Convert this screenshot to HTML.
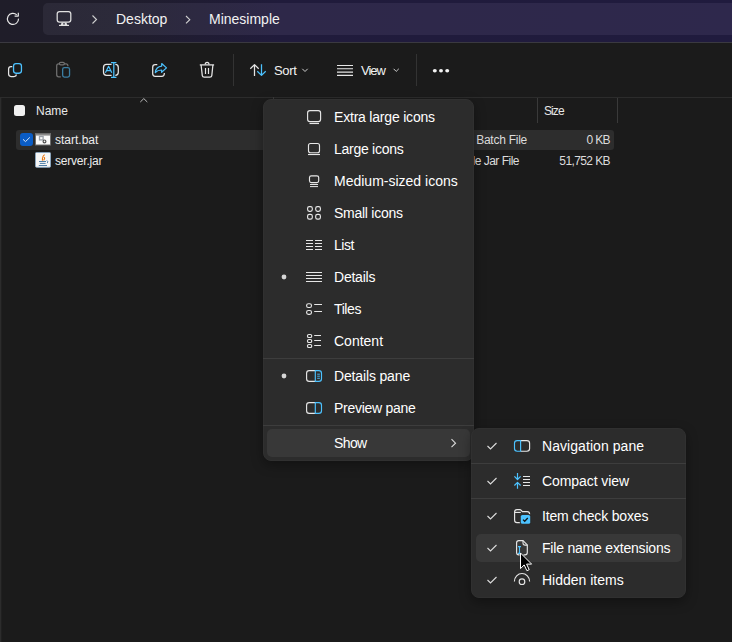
<!DOCTYPE html>
<html><head><meta charset="utf-8">
<style>
*{margin:0;padding:0;box-sizing:border-box}
html,body{width:732px;height:642px;overflow:hidden;background:#1b1b1b;font-family:"Liberation Sans",sans-serif;color:#fff}
.a{position:absolute}
svg{position:absolute;overflow:visible}
.t{position:absolute;white-space:nowrap;line-height:1}
#top{left:0;top:0;width:732px;height:42px;background:linear-gradient(90deg,#1f1d29 0px,#1f1d2b 120px,#201b3b 280px,#201b3e 732px)}
#addr{left:43px;top:3px;width:700px;height:32px;border-radius:5px;background:linear-gradient(90deg,#2b2937 0px,#2c2a3a 77px,#2e2849 237px,#2e284c 689px)}
#topline{left:0;top:42px;width:732px;height:1px;background:#3a3940}
.menu{background:#2c2c2c;border-radius:8px;box-shadow:0 4px 12px rgba(0,0,0,.35);border:1px solid #303030}
.mt{font-size:14px;color:#fff}
.sep{position:absolute;height:1px;background:#3d3d3d}
.hov{position:absolute;background:#383838;border-radius:5px}
</style></head><body>
<div id="top" class="a"></div>
<div id="addr" class="a"></div>
<div id="topline" class="a"></div>

<!-- refresh -->
<svg style="left:0;top:0" width="30" height="40">
  <path d="M18.5 18.6 A5.55 5.55 0 1 1 16.8 14.9" fill="none" stroke="#e8e8e8" stroke-width="1.2"/>
  <path d="M18.3 12.8 V16.1 H14.6" fill="none" stroke="#e8e8e8" stroke-width="1.2" stroke-linejoin="round"/>
</svg>
<!-- monitor -->
<svg style="left:0;top:0" width="80" height="40">
  <rect x="57.2" y="11.5" width="13.6" height="10.6" rx="2.3" fill="none" stroke="#e0e0e0" stroke-width="1.25"/>
  <path d="M61.6 22.6 L60.6 25.3 H67.4 L66.4 22.6 Z" fill="#e0e0e0"/><path d="M59 25.4 H69" stroke="#e0e0e0" stroke-width="1.2"/><rect x="63.2" y="23.2" width="1.6" height="1.3" fill="#2b2937"/>
</svg>
<svg style="left:0;top:0" width="200" height="40">
  <path d="M92.5 15.5 L96.5 19.5 L92.5 23.5" fill="none" stroke="#d0d0d0" stroke-width="1.1"/>
  <path d="M186 16 L189.8 19.7 L186 23.4" fill="none" stroke="#d0d0d0" stroke-width="1.1"/>
</svg>
<div class="t" style="left:116px;top:12px;font-size:14px;color:#f2f2f2">Desktop</div>
<div class="t" style="left:209px;top:12px;font-size:14px;color:#f2f2f2">Minesimple</div>


<!-- command bar -->
<svg style="left:0;top:0" width="460" height="97">
  <!-- copy -->
  <path d="M12.3 66.6 H11 Q8.6 66.6 8.6 69 V74.1 Q8.6 76.5 11 76.5 H14 Q16.3 76.5 16.3 74.6" fill="none" stroke="#e6e6e6" stroke-width="1.25"/>
  <rect x="13.55" y="63.55" width="7.9" height="9.7" rx="2.4" fill="none" stroke="#4cc2ff" stroke-width="1.3"/>
  <!-- paste (disabled) -->
  <path d="M60.8 76.8 H58.7 Q56.7 76.8 56.7 74.8 V65.8 Q56.7 63.8 58.7 63.8 H65.9 Q67.9 63.8 67.9 65.8 V66.3" fill="none" stroke="#707070" stroke-width="1.25"/>
  <rect x="59.4" y="62.3" width="5" height="2.6" rx="1.3" fill="#1b1b1b" stroke="#707070" stroke-width="1.2"/>
  <rect x="62.65" y="67.55" width="6.9" height="9.6" rx="1.8" fill="none" stroke="#3b7ea3" stroke-width="1.3"/>
  <!-- rename -->
  <path d="M111.6 64.4 H106.5 Q103.5 64.4 103.5 67.4 V72.3 Q103.5 75.3 106.5 75.3 H111.6" fill="none" stroke="#e6e6e6" stroke-width="1.25"/>
  <path d="M115.6 64.4 H115.3 Q118.3 64.4 118.3 67.4 V72.3 Q118.3 75.3 115.3 75.3 H115.6" fill="none" stroke="#e6e6e6" stroke-width="1.25"/>
  <path d="M113.8 62.5 V77.4 M111 62.5 H116.4 M111 77.4 H116.4" stroke="#4cc2ff" stroke-width="1.25" fill="none"/>
  <path d="M105.4 72.7 L108.6 66.3 L111.8 72.7 M106.4 70.6 H110.8" stroke="#4cc2ff" stroke-width="1.2" fill="none" stroke-linejoin="round"/>
  <!-- share -->
  <path d="M157.3 64.7 H155.2 Q152.7 64.7 152.7 67.2 V73.8 Q152.7 76.3 155.2 76.3 H161.8 Q164.3 76.3 164.3 73.8 V73" fill="none" stroke="#e6e6e6" stroke-width="1.25"/>
  <path d="M161.7 63.5 L166.5 67.9 L161.6 72.3 V70 Q157.6 70 155.3 72.5 Q156 66.6 161.7 66.1 Z" fill="none" stroke="#4cc2ff" stroke-width="1.2" stroke-linejoin="round"/>
  <!-- delete -->
  <path d="M199.8 64.9 H214.1" fill="none" stroke="#e6e6e6" stroke-width="1.25"/>
  <path d="M205.2 64.6 Q205.2 62.4 207.1 62.4 Q209 62.4 209 64.6" fill="none" stroke="#e6e6e6" stroke-width="1.2"/>
  <path d="M201.1 65 L202.3 75.6 Q202.5 77.2 204.2 77.2 H209.9 Q211.6 77.2 211.8 75.6 L212.9 65" fill="none" stroke="#e6e6e6" stroke-width="1.25"/>
  <path d="M205.5 68 V74 M208.5 68 V74" stroke="#e6e6e6" stroke-width="1.2"/>
  <!-- separators -->
  <path d="M233.5 54 V86 M416.5 54 V86" stroke="#333333" stroke-width="1"/>
  <!-- sort -->
  <path d="M254.5 64.6 V76 M250.3 68.8 L254.5 64.6 L258.7 68.8" fill="none" stroke="#e6e6e6" stroke-width="1.25" stroke-linejoin="round"/>
  <path d="M261.5 64.2 V75.4 M257.3 71.2 L261.5 75.4 L265.7 71.2" fill="none" stroke="#4cc2ff" stroke-width="1.25" stroke-linejoin="round"/>
  <path d="M302.3 68.8 L305 71.5 L307.7 68.8" fill="none" stroke="#cfcfcf" stroke-width="1"/>
  <!-- view -->
  <path d="M337 65.5 H353 M337 68.8 H353 M337 72.1 H353 M337 75.4 H353" stroke="#e6e6e6" stroke-width="1.1"/>
  <path d="M393.6 68.8 L396.2 71.4 L398.8 68.8" fill="none" stroke="#cfcfcf" stroke-width="1"/>
  <!-- more -->
  <ellipse cx="434.8" cy="70.8" rx="2" ry="1.75" fill="#f4f4f4"/>
  <ellipse cx="441" cy="70.8" rx="2" ry="1.75" fill="#f4f4f4"/>
  <ellipse cx="447.2" cy="70.8" rx="2" ry="1.75" fill="#f4f4f4"/>
</svg>
<div class="t" style="left:274px;top:64px;font-size:13px;color:#f2f2f2;letter-spacing:-0.3px">Sort</div>
<div class="t" style="left:361px;top:64px;font-size:13px;color:#f2f2f2;letter-spacing:-1px">View</div>

<!-- header -->
<div class="a" style="left:0;top:97px;width:732px;height:1px;background:#2c2c2c"></div>
<div class="a" style="left:0;top:98px;width:1px;height:544px;background:#2c2c2c"></div><div class="a" style="left:1px;top:98px;width:1px;height:544px;background:#202020"></div>
<div class="a" style="left:537px;top:98px;width:1px;height:25px;background:#3a3a3a"></div>
<div class="a" style="left:617px;top:98px;width:1px;height:25px;background:#3a3a3a"></div>
<div class="a" style="left:273px;top:97px;width:1px;height:3px;background:#3a3a3a"></div>
<div class="a" style="left:14px;top:105px;width:11.2px;height:11.2px;border-radius:2.5px;background:#f0f0f0"></div>
<div class="t" style="left:36px;top:105px;font-size:12px;color:#e8e8e8">Name</div>
<svg style="left:0;top:0" width="160" height="110"><path d="M140.3 102 L143.8 98.6 L147.3 102" fill="none" stroke="#bdbdbd" stroke-width="1"/></svg>
<div class="t" style="left:544px;top:105px;font-size:12px;color:#e8e8e8;letter-spacing:-0.9px">Size</div>

<!-- rows -->
<div class="a" style="left:16px;top:130px;width:598px;height:20px;border-radius:3px;background:#2d2d2d"></div>
<div class="a" style="left:20px;top:133px;width:13px;height:13px;border-radius:3px;background:#0b5dc6"></div>
<svg style="left:0;top:0" width="60" height="170">
 <path d="M23 139.3 L25.5 141.6 L29.8 137.4" fill="none" stroke="#d8e6f8" stroke-width="1"/>
 <rect x="35.5" y="133.5" width="15" height="11.5" fill="#fbfbfb" stroke="#6e6e6e" stroke-width="1"/>
 <rect x="36" y="134" width="14" height="1.6" fill="#8a8a8a"/>
 <rect x="39.5" y="136.5" width="3.6" height="3.4" fill="none" stroke="#9aa0a8" stroke-width="1.3"/>
 <circle cx="44.5" cy="141.4" r="1.4" fill="none" stroke="#505050" stroke-width="1.2"/>
 <rect x="35.5" y="152.5" width="15" height="14.8" rx="1" fill="#f7f7f7" stroke="#8aa4bc" stroke-width="1"/>
 <path d="M44.6 154.6 Q42 156.6 42.4 158.6 Q42.7 159.8 42.2 160.6 M43.7 157.2 Q45.6 157.6 43.6 160.4" fill="none" stroke="#e8740c" stroke-width="1.1"/>
 <path d="M39 161.5 H46 M39.8 163.4 H45.6 M38.8 165.5 H47" fill="none" stroke="#4f7ea6" stroke-width="1"/>
 <path d="M46.6 160.6 Q49 161.2 47.2 163.2" fill="none" stroke="#4f7ea6" stroke-width="0.9"/>
</svg>
<div class="t" style="left:55px;top:134px;font-size:12px;color:#ececec">start.bat</div>
<div class="t" style="left:55px;top:155px;font-size:12px;color:#ececec;letter-spacing:-0.2px">server.jar</div>
<div class="t" style="right:205px;top:134px;font-size:12px;color:#dcdcdc;letter-spacing:-0.25px">Windows Batch File</div>
<div class="t" style="right:213px;top:155px;font-size:12px;color:#dcdcdc;letter-spacing:-0.5px">Executable Jar File</div>
<div class="t" style="right:122px;top:134px;font-size:12px;color:#dcdcdc;letter-spacing:-0.6px">0 KB</div>
<div class="t" style="right:122px;top:155px;font-size:12px;color:#dcdcdc;letter-spacing:-0.6px">51,752 KB</div>


<!-- menu 1 -->
<div class="a menu" style="left:263px;top:99px;width:211px;height:362px"></div>
<div class="sep" style="left:263px;top:358px;width:211px"></div>
<div class="sep" style="left:263px;top:425px;width:211px"></div>
<div class="hov" style="left:267px;top:429px;width:203px;height:28px"></div>
<svg style="left:0;top:0" width="480" height="470">
 <g fill="none" stroke="#e6e6e6" stroke-width="1.15">
  <rect x="307.6" y="110.6" width="13" height="11" rx="2.3"/>
  <path d="M309.5 123.5 H319"/>
  <rect x="308.5" y="143.5" width="11" height="9.2" rx="2"/>
  <path d="M308 154.5 H320"/>
  <rect x="309.5" y="175.8" width="9.2" height="6.8" rx="1.8"/>
  <path d="M310 184.5 H318 M310 186.6 H318" stroke-width="1"/>
  <rect x="307.6" y="206.6" width="4.7" height="4.7" rx="1.7"/>
  <rect x="315.7" y="206.6" width="4.7" height="4.7" rx="1.7"/>
  <rect x="307.6" y="214.4" width="4.7" height="4.7" rx="1.7"/>
  <rect x="315.7" y="214.4" width="4.7" height="4.7" rx="1.7"/>
  <path d="M306 240.5 H313 M315 240.5 H322 M306 243.5 H313 M315 243.5 H322 M306 246.5 H313 M315 246.5 H322 M306 249.5 H313 M315 249.5 H322" stroke-width="1.1"/>
  <path d="M306 272.5 H322 M306 275.5 H322 M306 278.5 H322 M306 281.5 H322" stroke-width="1.1"/>
  <rect x="306.6" y="303.7" width="4.9" height="3.8" rx="1.8"/>
  <rect x="306.6" y="310.5" width="4.9" height="3.8" rx="1.8"/>
  <path d="M314.2 304.5 H322 M314.2 311.5 H322" stroke-width="1.1"/>
  <rect x="307.5" y="334.5" width="4.2" height="3" rx="1.3"/>
  <rect x="307.5" y="339.5" width="4.2" height="3" rx="1.3"/>
  <rect x="307.5" y="344.5" width="4.2" height="3" rx="1.3"/>
  <path d="M314.2 335.5 H321 M314.2 340.5 H321 M314.2 345.5 H321" stroke-width="1.1"/>
  <path d="M315.3 370.6 H309.2 Q306.6 370.6 306.6 373.2 V378.8 Q306.6 381.4 309.2 381.4 H315.3"/>
  <path d="M315.3 402.6 H309.2 Q306.6 402.6 306.6 405.2 V410.8 Q306.6 413.4 309.2 413.4 H315.3"/>
 </g>
 <g fill="none" stroke="#4cc2ff" stroke-width="1.15">
  <path d="M315.3 370.6 H318.9 Q321.5 370.6 321.5 373.2 V378.8 Q321.5 381.4 318.9 381.4 H315.3 Z"/>
  <path d="M317.2 374.2 H319.9 M317.2 376.2 H319.9 M317.2 378.3 H319.9" stroke-width="0.9"/>
  <path d="M315.3 402.6 H318.9 Q321.5 402.6 321.5 405.2 V410.8 Q321.5 413.4 318.9 413.4 H315.3 Z"/>
 </g>
 <circle cx="284" cy="277" r="2.4" fill="#d6d6d6"/>
 <circle cx="284" cy="376" r="2.4" fill="#d6d6d6"/>
 <path d="M451.5 439.2 L455.5 443.2 L451.5 447.2" fill="none" stroke="#dcdcdc" stroke-width="1.1"/>
</svg>
<div class="t mt" style="left:334px;top:110px;letter-spacing:-0.2px">Extra large icons</div>
<div class="t mt" style="left:334px;top:142px;letter-spacing:-0.27px">Large icons</div>
<div class="t mt" style="left:334px;top:174px;letter-spacing:0px">Medium-sized icons</div>
<div class="t mt" style="left:334px;top:206px;letter-spacing:-0.26px">Small icons</div>
<div class="t mt" style="left:334px;top:238px;letter-spacing:-0.5px">List</div>
<div class="t mt" style="left:334px;top:270px;letter-spacing:-0.23px">Details</div>
<div class="t mt" style="left:334px;top:302px;letter-spacing:-0.4px">Tiles</div>
<div class="t mt" style="left:334px;top:334px;letter-spacing:0px">Content</div>
<div class="t mt" style="left:334px;top:369px;letter-spacing:-0.15px">Details pane</div>
<div class="t mt" style="left:334px;top:401px;letter-spacing:-0.28px">Preview pane</div>
<div class="t mt" style="left:334px;top:436px;letter-spacing:-0.6px">Show</div>

<!-- menu 2 -->
<div class="a menu" style="left:471px;top:428px;width:215px;height:170px"></div>
<div class="sep" style="left:471px;top:463px;width:215px"></div>
<div class="sep" style="left:471px;top:498px;width:215px"></div>
<div class="hov" style="left:476px;top:534px;width:206px;height:28px"></div>
<svg style="left:0;top:0" width="700" height="600">
 <g fill="none" stroke="#dcdcdc" stroke-width="1.1">
  <path d="M487.5 446 L490.5 449 L496.5 443"/>
  <path d="M487.5 481 L490.5 484 L496.5 478"/>
  <path d="M487.5 516 L490.5 519 L496.5 513"/>
  <path d="M487.5 548 L490.5 551 L496.5 545"/>
  <path d="M487.5 580 L490.5 583 L496.5 577"/>
 </g>
 <g fill="none" stroke="#e6e6e6" stroke-width="1.15">
  <path d="M520.6 440.6 H526.9 Q529.6 440.6 529.6 443.3 V448.5 Q529.6 451.2 526.9 451.2 H520.6"/>
  <path d="M523 476.5 H530 M523 479.5 H530 M523 482.5 H530 M523 485.5 H530" stroke-width="1.1"/>
  <path d="M520.5 522.6 H517 Q514.6 522.6 514.6 520.2 V512 Q514.6 509.6 517 509.6 H519.6 Q520.6 509.6 521.3 510.4 L522.3 511.6 H527.2 Q529.6 511.6 529.6 514 V514.6"/>
  <path d="M514.8 512.4 H520.8"/>
  <path d="M519.6 554.9 H518.8 Q516.6 554.9 516.6 552.6 V542.8 Q516.6 540.6 518.8 540.6 H523 L527.3 544.9 V552.6 Q527.3 554.9 525 554.9 H523.5"/>
  <path d="M523 540.7 V543 Q523 545.1 525.1 545.1 H527.3" stroke-width="1.05"/>
  <path d="M514.4 581.4 A7.6 7.9 0 0 1 529.6 581.4"/>
  <circle cx="522" cy="581.7" r="2.8"/>
 </g>
 <g fill="none" stroke="#4cc2ff" stroke-width="1.15">
  <path d="M520.6 440.6 H517.2 Q514.5 440.6 514.5 443.3 V448.5 Q514.5 451.2 517.2 451.2 H520.6 Z"/>
  <path d="M517.5 473 V479.4 M514.4 476.4 L517.5 479.5 L520.6 476.4 M517.5 482.4 V488.8 M514.4 485.5 L517.5 482.4 L520.6 485.5" stroke-width="1.2" stroke-linejoin="round"/>
  <path d="M519.5 546.6 V553.4 M518 546.6 H521 M518 553.4 H520.6" stroke-width="1.1"/>
 </g>
 <rect x="519.8" y="514" width="11.4" height="10.8" rx="2.3" fill="#2c2c2c"/>
 <rect x="520.8" y="515" width="9.4" height="8.8" rx="1.6" fill="#4cc2ff"/>
 <path d="M523 519.6 L524.7 521.3 L527.8 518" fill="none" stroke="#111" stroke-width="1.25"/>
</svg>
<div class="t mt" style="left:542px;top:439px;letter-spacing:0.06px">Navigation pane</div>
<div class="t mt" style="left:542px;top:474px;letter-spacing:-0.07px">Compact view</div>
<div class="t mt" style="left:542px;top:509px;letter-spacing:-0.17px">Item check boxes</div>
<div class="t mt" style="left:542px;top:541px;letter-spacing:-0.2px">File name extensions</div>
<div class="t mt" style="left:542px;top:573px;letter-spacing:0px">Hidden items</div>
<!-- cursor -->
<svg style="left:0;top:0" width="700" height="600">
 <path d="M520.5 553 V568.6 L524.2 564.9 L526.9 570.7 L529.2 569.7 L526.6 564.1 H531.6 Z" fill="#000" stroke="#fff" stroke-width="1" stroke-linejoin="round"/>
</svg>

</body></html>
